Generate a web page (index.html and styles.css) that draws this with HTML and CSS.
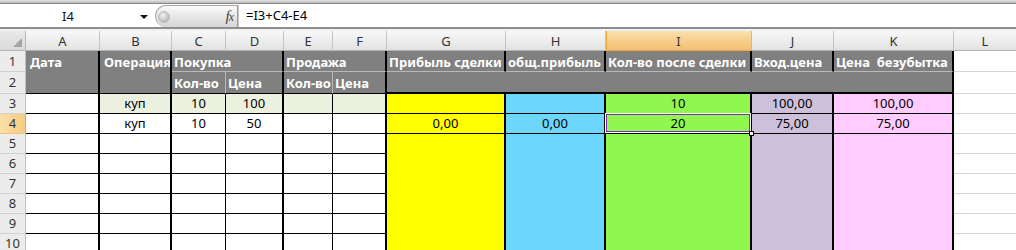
FILE: index.html
```html
<!DOCTYPE html>
<html>
<head>
<meta charset="utf-8">
<link rel="stylesheet" href="styles.css">
</head>
<body>
<div class="top"></div>
<div class="fbar">
  <div class="namebox"><span class="name">I4</span><span class="arrow"></span></div>
  <div class="fxbtn"><span class="dimple"></span><span class="fx">f<span class="fxx">x</span></span></div>
  <div class="sep"></div>
  <div class="formula">=I3+C4-E4</div>
</div>
<div class="strip"></div>
<div class="sheet">
  <div class="corner"><span class="tri"></span></div>
  <div class="ch">A</div><div class="ch">B</div><div class="ch">C</div><div class="ch">D</div><div class="ch">E</div><div class="ch">F</div><div class="ch">G</div><div class="ch">H</div><div class="ch chsel">I</div><div class="ch">J</div><div class="ch">K</div><div class="ch chl">L</div>

  <div class="rh rh1">1</div>
  <div class="hd m2 tk hb pl">Дата</div>
  <div class="hd m2 tk hb pl">Операция</div>
  <div class="hd s2 tk lb">Покупка</div>
  <div class="hd s2 tk lb">Продажа</div>
  <div class="hd tk lb">Прибыль сделки</div>
  <div class="hd tk lb">общ.прибыль</div>
  <div class="hd tk lb">Кол-во после сделки</div>
  <div class="hd tk lb">Вход.цена</div>
  <div class="hd tk lb">Цена&nbsp; безубытка</div>
  <div class="c l"></div>

  <div class="rh rh2">2</div>
  <div class="hd lr hb">Кол-во</div>
  <div class="hd tk hb">Цена</div>
  <div class="hd lr hb">Кол-во</div>
  <div class="hd tk hb">Цена</div>
  <div class="hd s5 tk hb2"></div>
  <div class="c l"></div>

  <div class="rh">3</div>
  <div class="c tk"></div>
  <div class="c tk lg">куп</div>
  <div class="c tn lg">10</div>
  <div class="c tk lg">100</div>
  <div class="c tn lg"></div>
  <div class="c tk lg"></div>
  <div class="c tk yl"></div>
  <div class="c tk bl"></div>
  <div class="c tk gr">10</div>
  <div class="c tk lv">100,00</div>
  <div class="c tk pk">100,00</div>
  <div class="c l"></div>

  <div class="rh rhsel">4</div>
  <div class="c tk"></div>
  <div class="c tk">куп</div>
  <div class="c tn">10</div>
  <div class="c tk">50</div>
  <div class="c tn"></div>
  <div class="c tk"></div>
  <div class="c tk yl">0,00</div>
  <div class="c tk bl">0,00</div>
  <div class="c tk gr cur">20<span class="sel"></span><span class="handle"></span></div>
  <div class="c tk lv">75,00</div>
  <div class="c tk pk">75,00</div>
  <div class="c l"></div>

  <div class="rh">5</div>
  <div class="c tk"></div><div class="c tk"></div><div class="c tn"></div><div class="c tk"></div><div class="c tn"></div><div class="c tk"></div>
  <div class="c tk yl nb"></div><div class="c tk bl nb"></div><div class="c tk gr nb"></div><div class="c tk lv nb"></div><div class="c tk pk nb"></div><div class="c l"></div>

  <div class="rh">6</div>
  <div class="c tk"></div><div class="c tk"></div><div class="c tn"></div><div class="c tk"></div><div class="c tn"></div><div class="c tk"></div>
  <div class="c tk yl nb"></div><div class="c tk bl nb"></div><div class="c tk gr nb"></div><div class="c tk lv nb"></div><div class="c tk pk nb"></div><div class="c l"></div>

  <div class="rh">7</div>
  <div class="c tk"></div><div class="c tk"></div><div class="c tn"></div><div class="c tk"></div><div class="c tn"></div><div class="c tk"></div>
  <div class="c tk yl nb"></div><div class="c tk bl nb"></div><div class="c tk gr nb"></div><div class="c tk lv nb"></div><div class="c tk pk nb"></div><div class="c l"></div>

  <div class="rh">8</div>
  <div class="c tk"></div><div class="c tk"></div><div class="c tn"></div><div class="c tk"></div><div class="c tn"></div><div class="c tk"></div>
  <div class="c tk yl nb"></div><div class="c tk bl nb"></div><div class="c tk gr nb"></div><div class="c tk lv nb"></div><div class="c tk pk nb"></div><div class="c l"></div>

  <div class="rh">9</div>
  <div class="c tk"></div><div class="c tk"></div><div class="c tn"></div><div class="c tk"></div><div class="c tn"></div><div class="c tk"></div>
  <div class="c tk yl nb"></div><div class="c tk bl nb"></div><div class="c tk gr nb"></div><div class="c tk lv nb"></div><div class="c tk pk nb"></div><div class="c l"></div>

  <div class="rh">10</div>
  <div class="c tk"></div><div class="c tk"></div><div class="c tn"></div><div class="c tk"></div><div class="c tn"></div><div class="c tk"></div>
  <div class="c tk yl nb"></div><div class="c tk bl nb"></div><div class="c tk gr nb"></div><div class="c tk lv nb"></div><div class="c tk pk nb"></div><div class="c l"></div>
</div>
</body>
</html>
```

FILE: styles.css
```css
* { box-sizing: border-box; }
html, body { margin: 0; padding: 0; }
body {
  width: 1016px;
  height: 250px;
  overflow: hidden;
  background: #fff;
  font-family: "Noto Sans", "Open Sans", sans-serif;
  font-size: 13px;
  color: #000;
}

.top {
  height: 4px;
  background: linear-gradient(#e4e4e4, #b9b9b9);
  border-bottom: 1px solid #8a8a8a;
}

.fbar {
  height: 25px;
  display: flex;
  align-items: flex-end;
  background: #fff;
  border-bottom: 2px solid #8e8e8e;
}
.namebox {
  width: 155px;
  height: 23px;
  display: flex;
  align-items: center;
}
.name {
  margin-left: 62px;
  width: 78px;
  color: #111;
}
.arrow {
  width: 0;
  height: 0;
  border-left: 4px solid transparent;
  border-right: 4px solid transparent;
  border-top: 4px solid #111;
  margin-top: 2px;
}
.fxbtn {
  width: 82px;
  height: 22px;
  border: 1px solid #a9a9a9;
  border-right: 0;
  border-bottom: 0;
  border-radius: 11px 0 0 0;
  border-top-left-radius: 11px;
  border-bottom-left-radius: 11px;
  background: linear-gradient(#fbfbfb, #e3e3e3 60%, #d6d6d6);
  display: flex;
  align-items: center;
  justify-content: space-between;
  padding: 0 4px 0 2px;
}
.dimple {
  width: 12px;
  height: 12px;
  border-radius: 50%;
  background: radial-gradient(circle at 40% 35%, #f4f4f4, #b9b9b9 70%, #a6a6a6);
  border: 1px solid #bdbdbd;
}
.fx {
  font-family: "Liberation Serif", "DejaVu Serif", serif;
  font-style: italic;
  font-size: 15px;
  color: #444;
  letter-spacing: -1px;
  line-height: 20px;
}
.fxx { font-size: 12px; }
.sep {
  width: 2px;
  height: 22px;
  background: #c9c9c9;
  border-left: 1px solid #9a9a9a;
}
.formula {
  height: 23px;
  line-height: 23px;
  padding-left: 7px;
  color: #000;
}
.strip {
  height: 2px;
  background: #eef1f6;
}

.sheet {
  display: grid;
  grid-template-columns: 26px 74px 72px 54px 58px 49px 54px 119px 100px 146px 82px 120px 62px;
  grid-template-rows: 20px 21px 22px repeat(8, 20px);
}

.corner {
  background: linear-gradient(#e9e9e9, #dadada);
  border-right: 1px solid #b7b7b7;
  border-bottom: 1px solid #b7b7b7;
  display: flex;
  align-items: flex-end;
  justify-content: flex-end;
  padding: 0 3px 3px 0;
}
.tri {
  width: 9px;
  height: 9px;
  background: #a5a5a5;
  clip-path: polygon(100% 0, 100% 100%, 0 100%);
}
.ch {
  background: linear-gradient(#f8f8f8, #ededed 50%, #e2e2e2);
  border-right: 1px solid #c3c3c3;
  border-bottom: 1px solid #b3b3b3;
  color: #333;
  text-align: center;
  line-height: 19px;
  padding-top: 1px;
}
.chsel {
  background: linear-gradient(#fbe1ae, #f7cf8c 50%, #f3c070);
  border-bottom-color: #f0a742;
  border-right-color: #f0b35a;
  box-shadow: inset 1px 0 0 #f0a742;
}
.chl { border-right: 0; }

.rh {
  background: #ececec;
  border-right: 1px solid #bfbfbf;
  border-bottom: 1px solid #d2d2d2;
  color: #333;
  text-align: center;
  line-height: 19px;
}
.rh1, .rh2 { padding-top: 1px; }
.rhsel {
  background: linear-gradient(90deg, #fbe0aa, #f6cb82);
  border-right: 1px solid #f0a742;
  border-bottom-color: #f0c27a;
}

.hd {
  background: #808080;
  color: #fff;
  font-weight: bold;
  white-space: nowrap;
  overflow: hidden;
  line-height: 18px;
  padding: 2px 0 0 2px;
}
.pl { padding-left: 4px; }
.m2 { grid-row: span 2; }
.s2 { grid-column: span 2; }
.s5 { grid-column: span 5; }
.lb { border-bottom: 1px solid #b9b9b9; }
.lr { border-right: 1px solid #b9b9b9; }
.hb { border-bottom: 1px solid #000; }
.hb2 { border-bottom: 2px solid #000; }

.c {
  display: flex;
  justify-content: center;
  line-height: 19px;
  border-bottom: 1px solid #000;
}
.tk { border-right: 2px solid #000; }
.tn { border-right: 1px solid #000; }
.nb { border-bottom: 0; }
.l { border-bottom: 1px solid #d6d6d6; }

.lg { background: #ebf1de; }
.yl { background: #ffff00; }
.bl { background: #6dd6fd; }
.gr { background: #8ff74e; }
.lv { background: #ccc0da; }
.pk { background: #ffccff; }

.cur { position: relative; }
.sel {
  position: absolute;
  left: -1px;
  top: -1px;
  right: -1px;
  bottom: 0;
  border: 1px solid #fff;
  box-shadow: inset 0 0 0 1px #7a2fb0;
}
.handle {
  position: absolute;
  right: -4px;
  bottom: -3px;
  width: 5px;
  height: 5px;
  background: #fff;
  border: 1px solid #000;
}
```
